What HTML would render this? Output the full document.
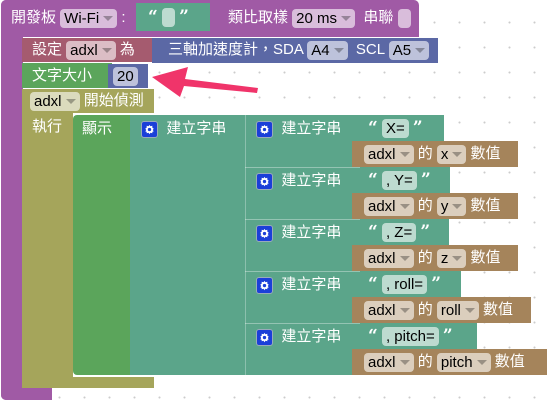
<!DOCTYPE html><html><head><meta charset="utf-8"><style>
*{margin:0;padding:0;box-sizing:border-box}
body{width:549px;height:404px;overflow:hidden;position:relative;background:#fff;
background-image:radial-gradient(circle,#ccc 0.8px,transparent 1.2px);background-size:25px 25px;background-position:-3px 10px;
font-family:"Liberation Sans","Noto Sans CJK TC",sans-serif;font-size:15px;color:#fff}
.b{position:absolute}
.t{position:absolute;white-space:nowrap;line-height:20px}
.f{display:inline-block;background:rgba(255,255,255,.6);color:#000;border-radius:4px;padding:0 4px;line-height:19px;height:19px;vertical-align:middle}
.dd:after{content:"";display:inline-block;margin-left:4px;border-left:5px solid transparent;border-right:5px solid transparent;border-top:5px solid rgba(0,0,0,.3);vertical-align:middle}
.q{font-family:"DejaVu Serif",serif;font-weight:bold;font-size:17px;vertical-align:middle}
.g{display:inline-block;width:17px;height:17px;background:#1b3fd8;border-radius:3px;vertical-align:middle;border:1px solid #9ab}
.g svg{display:block}
.P{background:#a05aa5}.M{background:#a55b6f}.B{background:#5b68a5}.G{background:#5ba55b}.O{background:#a5a55b}.T{background:#5ba58a}.W{background:#a5845b}
</style></head><body>
<svg width="0" height="0" style="position:absolute"><defs><symbol id="gear" viewBox="0 0 16 16"><path d="M8 3 L9 4.5 L11 4 L11 6 L12.5 7 L11.5 8.5 L12.5 10 L11 10.5 L11 12 L9 11.5 L8 13 L7 11.5 L5 12 L5 10.5 L3.5 10 L4.5 8.5 L3.5 7 L5 6 L5 4 L7 4.5 Z" fill="#fff"/><circle cx="8" cy="8" r="1.8" fill="#1b3fd8"/></symbol></defs></svg>
<!-- purple -->
<div class="b P" style="left:1px;top:0;width:418px;height:37px;border-radius:5px 5px 0 0"></div>
<div class="b P" style="left:1px;top:0;width:22px;height:400px;border-radius:5px 0 0 5px"></div>
<div class="b P" style="left:1px;top:388px;width:51px;height:12px;border-radius:0 0 0 5px"></div>
<div class="t" style="left:11px;top:8px">開發板 <span class="f dd">Wi-Fi</span> : </div>
<div class="b T" style="left:136px;top:3px;width:74px;height:28px"></div>
<div class="t" style="left:148px;top:7px"><span class="q">“</span> <span class="f" style="width:13px"></span> <span class="q">”</span></div>
<div class="t" style="left:228px;top:8px">類比取樣 <span class="f dd">20 ms</span> &nbsp;串聯 <span class="f" style="width:13px;padding:0"></span></div>
<!-- set -->
<div class="b M" style="left:22px;top:38px;width:134px;height:24px"></div>
<div class="t" style="left:32px;top:40px">設定 <span class="f dd">adxl</span> 為</div>
<div class="b B" style="left:152px;top:38px;width:286px;height:25px"></div>
<div class="t" style="left:168px;top:40px">三軸加速度計，SDA <span class="f dd">A4</span> &nbsp;SCL <span class="f dd">A5</span></div>
<!-- text size -->
<div class="b G" style="left:22px;top:63px;width:90px;height:25px"></div>
<div class="t" style="left:32px;top:66px">文字大小</div>
<div class="b B" style="left:108px;top:64px;width:40px;height:24px"></div>
<div class="t" style="left:113px;top:66px"><span class="f">20</span></div>
<!-- arrow -->
<svg class="b" style="left:140px;top:55px" width="130" height="50"><path d="M118 33 L45 24 L48 12 L12 22 L40 42 L44 31 L117 38 Z" fill="#f0346a"/></svg>
<!-- olive -->
<div class="b O" style="left:22px;top:89px;width:132px;height:24px"></div>
<div class="b O" style="left:22px;top:89px;width:51px;height:299px"></div>
<div class="b O" style="left:22px;top:377px;width:132px;height:11px"></div>
<div class="t" style="left:30px;top:91px"><span class="f dd">adxl</span> 開始偵測</div>
<div class="t" style="left:32px;top:117px">執行</div>
<!-- display -->
<div class="b G" style="left:73px;top:115px;width:58px;height:260px;border-radius:4px 0 0 4px"></div>
<div class="t" style="left:82px;top:119px">顯示</div>
<div class="b T" style="left:130px;top:115px;width:116px;height:260px"></div>
<div class="t" style="left:141px;top:119px"><span class="g"><svg width="15" height="15"><use href="#gear"/></svg></span> &nbsp;建立字串</div>
<div class="b T" style="left:245px;top:115px;width:116px;height:260px;border-left:1px solid rgba(255,255,255,.3)"></div>
<div class="b" style="left:245px;top:167px;width:116px;height:1px;background:rgba(255,255,255,.35)"></div>
<div class="b" style="left:245px;top:219px;width:116px;height:1px;background:rgba(255,255,255,.35)"></div>
<div class="b" style="left:245px;top:271px;width:116px;height:1px;background:rgba(255,255,255,.35)"></div>
<div class="b" style="left:245px;top:323px;width:116px;height:1px;background:rgba(255,255,255,.35)"></div>

<div class="t" style="left:256px;top:119px"><span class="g"><svg width="15" height="15"><use href="#gear"/></svg></span> &nbsp;建立字串</div>
<div class="b T" style="left:360px;top:115px;width:84px;height:27px"></div>
<div class="t" style="left:368px;top:118px"><span class="q">“</span> <span class="f">X=</span> <span class="q">”</span></div>
<div class="b W" style="left:352px;top:141px;width:166px;height:26px"></div>
<div class="t" style="left:364px;top:144px"><span class="f dd">adxl</span> 的 <span class="f dd">x</span> 數值</div>

<div class="t" style="left:256px;top:171px"><span class="g"><svg width="15" height="15"><use href="#gear"/></svg></span> &nbsp;建立字串</div>
<div class="b T" style="left:360px;top:167px;width:90px;height:27px"></div>
<div class="t" style="left:368px;top:170px"><span class="q">“</span> <span class="f">, Y=</span> <span class="q">”</span></div>
<div class="b W" style="left:352px;top:193px;width:166px;height:26px"></div>
<div class="t" style="left:364px;top:196px"><span class="f dd">adxl</span> 的 <span class="f dd">y</span> 數值</div>

<div class="t" style="left:256px;top:223px"><span class="g"><svg width="15" height="15"><use href="#gear"/></svg></span> &nbsp;建立字串</div>
<div class="b T" style="left:360px;top:219px;width:89px;height:27px"></div>
<div class="t" style="left:368px;top:222px"><span class="q">“</span> <span class="f">, Z=</span> <span class="q">”</span></div>
<div class="b W" style="left:352px;top:245px;width:166px;height:26px"></div>
<div class="t" style="left:364px;top:248px"><span class="f dd">adxl</span> 的 <span class="f dd">z</span> 數值</div>

<div class="t" style="left:256px;top:275px"><span class="g"><svg width="15" height="15"><use href="#gear"/></svg></span> &nbsp;建立字串</div>
<div class="b T" style="left:360px;top:271px;width:101px;height:27px"></div>
<div class="t" style="left:368px;top:274px"><span class="q">“</span> <span class="f">, roll=</span> <span class="q">”</span></div>
<div class="b W" style="left:352px;top:297px;width:179px;height:26px"></div>
<div class="t" style="left:364px;top:300px"><span class="f dd">adxl</span> 的 <span class="f dd">roll</span> 數值</div>

<div class="t" style="left:256px;top:327px"><span class="g"><svg width="15" height="15"><use href="#gear"/></svg></span> &nbsp;建立字串</div>
<div class="b T" style="left:360px;top:323px;width:117px;height:27px"></div>
<div class="t" style="left:368px;top:326px"><span class="q">“</span> <span class="f">, pitch=</span> <span class="q">”</span></div>
<div class="b W" style="left:352px;top:349px;width:195px;height:26px"></div>
<div class="t" style="left:364px;top:352px"><span class="f dd">adxl</span> 的 <span class="f dd">pitch</span> 數值</div>
</body></html>
